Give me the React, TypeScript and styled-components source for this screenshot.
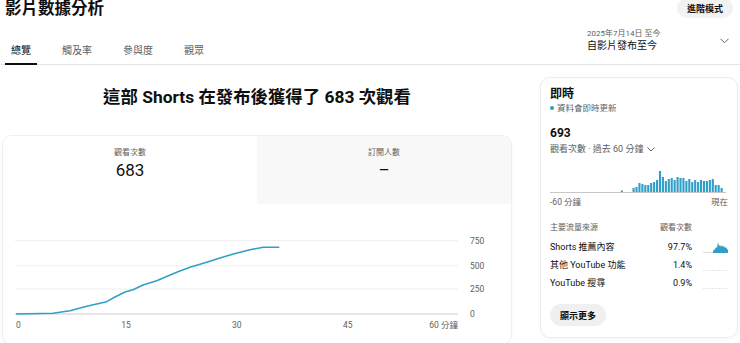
import React from 'react'
import styled, { createGlobalStyle } from 'styled-components'

const ACCENT = '#2f9fc8'
const MUTED = '#606060'
const FONT = 'Roboto, "Noto Sans CJK TC", sans-serif'

const GlobalStyle = createGlobalStyle`
  html, body {
    margin: 0;
    padding: 0;
    background: #fff;
  }
  body {
    font-family: ${FONT};
    color: #0f0f0f;
  }
`

const Page = styled.div`
  width: 740px;
  height: 343px;
  overflow: hidden;
`

const TopBar = styled.div`
  height: 18px;
  display: flex;
  justify-content: space-between;
  align-items: flex-start;
  padding: 0 7px 0 5px;
`

const Title = styled.h1`
  margin: 0;
  font-size: 16.5px;
  line-height: 18px;
  font-weight: 700;
`

const AdvancedButton = styled.button`
  margin-top: -2px;
  height: 20px;
  padding: 0 10px;
  border: none;
  border-radius: 10px;
  background: #f2f2f2;
  font: 700 9px ${FONT};
  color: #0f0f0f;
`

const TabRow = styled.div`
  height: 46px;
  display: flex;
  justify-content: space-between;
  align-items: flex-end;
  padding: 0 11px 0 5px;
  border-bottom: 1px solid #e5e5e5;
`

const Tabs = styled.div`
  display: flex;
  gap: 19px;
`

const Tab = styled.div<{ $active?: boolean }>`
  height: 25px;
  line-height: 25px;
  padding: 0 6px;
  margin-bottom: -1px;
  font-size: 10px;
  color: ${(p) => (p.$active ? '#0f0f0f' : MUTED)};
  border-bottom: 2px solid ${(p) => (p.$active ? '#0f0f0f' : 'transparent')};
`

const DateSelect = styled.div`
  align-self: flex-start;
  margin-top: 10px;
  width: 142px;
  display: flex;
  justify-content: space-between;
  align-items: center;
`

const DateRange = styled.div`
  font-size: 8px;
  line-height: 11px;
  color: ${MUTED};
`

const DateLabel = styled.div`
  font-size: 10px;
  line-height: 14px;
`

const Main = styled.div`
  display: flex;
  gap: 28px;
  padding: 0 2px;
`

const LeftCol = styled.div`
  width: 510px;
  flex: none;
`

const Headline = styled.h2`
  margin: 20px 0 0;
  font-size: 17.4px;
  line-height: 24px;
  font-weight: 700;
  text-align: center;
`

const MetricCard = styled.div`
  margin-top: 26px;
  border: 1px solid #efefef;
  border-radius: 10px;
  overflow: hidden;
  box-shadow: 0 1px 3px rgba(0, 0, 0, 0.04);
`

const MetricTabs = styled.div`
  display: grid;
  grid-template-columns: 1fr 1fr;
  height: 68px;
`

const MetricTab = styled.div<{ $selected?: boolean }>`
  background: ${(p) => (p.$selected ? '#fff' : '#f8f8f8')};
  text-align: center;
  padding-top: 12px;
`

const MetricLabel = styled.div`
  font-size: 8px;
  line-height: 10px;
  color: ${MUTED};
`

const MetricValue = styled.div`
  margin-top: 2px;
  font-size: 17px;
  line-height: 20px;
`

const Chart = styled.svg`
  display: block;
  font-family: ${FONT};
`

const RealtimeCard = styled.div`
  width: 198px;
  box-sizing: border-box;
  margin-top: 12px;
  align-self: flex-start;
  border: 1px solid #ececec;
  border-radius: 10px;
  padding: 8px 9px 11px;
  box-shadow: 0 1px 3px rgba(0, 0, 0, 0.04);
`

const RtTitle = styled.div`
  font-size: 12px;
  line-height: 16px;
  font-weight: 700;
`

const RtLive = styled.div`
  display: flex;
  align-items: center;
  gap: 3px;
  font-size: 8.5px;
  line-height: 12px;
  color: ${MUTED};
`

const Dot = styled.span`
  width: 4px;
  height: 4px;
  border-radius: 50%;
  background: ${ACCENT};
`

const RtValue = styled.div`
  margin-top: 11px;
  font-size: 12px;
  line-height: 16px;
  font-weight: 700;
`

const RtMetric = styled.div`
  margin-top: 2px;
  display: flex;
  align-items: center;
  gap: 4px;
  font-size: 9px;
  line-height: 12px;
  color: ${MUTED};
`

const Bars = styled.svg`
  display: block;
  margin-top: 8px;
`

const AxisRow = styled.div`
  margin-top: 4px;
  display: flex;
  justify-content: space-between;
  font-size: 8.5px;
  line-height: 11px;
  color: ${MUTED};
`

const SourceGrid = styled.div`
  margin-top: 14px;
  display: grid;
  grid-template-columns: 1fr auto 25px;
  column-gap: 11px;
  align-items: center;
`

const SourceHead = styled.div<{ $right?: boolean }>`
  font-size: 8px;
  line-height: 11px;
  color: ${MUTED};
  text-align: ${(p) => (p.$right ? 'right' : 'left')};
  margin-bottom: 5px;
`

const SourceCell = styled.div<{ $right?: boolean }>`
  font-size: 9px;
  line-height: 18px;
  text-align: ${(p) => (p.$right ? 'right' : 'left')};
`

const MoreButton = styled.button`
  margin-top: 12px;
  height: 22px;
  padding: 0 10px;
  border: none;
  border-radius: 11px;
  background: #f0f0f0;
  font: 700 9px ${FONT};
  color: #0f0f0f;
`

const linePoints: [number, number][] = [
  [13, 110], [50, 109.3], [67, 106.7], [83.7, 102.3], [103.7, 97.7], [112, 93],
  [122, 88], [130, 85.7], [140, 81], [153.7, 76.7], [173.7, 68.3], [187, 63.3],
  [203.7, 58.3], [213.7, 55], [230.3, 50], [247, 45.7], [260.3, 43.3], [276.3, 43.3],
]

const barHeights: Record<number, number> = { 24: 1.5 }
;[4, 5, 9, 8, 7, 7, 9, 10, 12, 21, 15, 11, 13, 14, 12, 15, 14, 14, 11, 13, 10, 12, 10, 12, 11, 11, 12, 13, 7, 7, 4].forEach(
  (h, i) => {
    barHeights[28 + i] = h
  }
)

function ViewsChart() {
  const grid = [
    { y: 36.7, label: '750' },
    { y: 61.7, label: '500' },
    { y: 85, label: '250' },
  ]
  const d = linePoints.map(([x, y], i) => `${i ? 'L' : 'M'}${x} ${y}`).join(' ')
  return (
    <Chart width={508} height={140} viewBox="0 0 508 140">
      {grid.map((g) => (
        <g key={g.label}>
          <line x1={12} x2={455} y1={g.y} y2={g.y} stroke="#eeeeee" strokeWidth={1} />
          <text x={467} y={g.y + 3} fontSize={8.5} fill={MUTED}>{g.label}</text>
        </g>
      ))}
      <line x1={12} x2={455} y1={110} y2={110} stroke="#cccccc" strokeWidth={1} />
      <text x={467} y={113} fontSize={8.5} fill={MUTED}>0</text>
      <path d={d} fill="none" stroke={ACCENT} strokeWidth={1.5} strokeLinejoin="round" />
      <text x={13} y={124} fontSize={8.5} fill={MUTED}>0</text>
      <text x={123} y={124} fontSize={8.5} fill={MUTED} textAnchor="middle">15</text>
      <text x={233.7} y={124} fontSize={8.5} fill={MUTED} textAnchor="middle">30</text>
      <text x={344.7} y={124} fontSize={8.5} fill={MUTED} textAnchor="middle">45</text>
      <text x={455} y={124} fontSize={8.5} fill={MUTED} textAnchor="end">60 分鐘</text>
    </Chart>
  )
}

function RealtimeBars() {
  const slot = 176 / 60
  return (
    <Bars width={178} height={30} viewBox="0 0 178 30">
      {Object.entries(barHeights).map(([k, h]) => (
        <rect key={k} x={Number(k) * slot + 0.4} y={29 - h} width={2.1} height={h} fill={ACCENT} />
      ))}
      <line x1={0} x2={176} y1={29.5} y2={29.5} stroke="#c8c8c8" strokeWidth={1} />
    </Bars>
  )
}

function Sparkline({ active }: { active?: boolean }) {
  if (active) {
    return (
      <svg width={25} height={12} viewBox="0 0 25 12">
        <line x1={0} x2={10} y1={11.5} y2={11.5} stroke="#d6d6d6" strokeWidth={0.8} />
        <path
          d="M10 12 L10 10 L12 8 L13 6 L14 7 L15 1 L16 5 L17 4 L18 6 L19 4 L20 6 L21 5 L22 7 L23 6 L24 8 L25 9 L25 12 Z"
          fill={ACCENT}
        />
      </svg>
    )
  }
  return (
    <svg width={25} height={12} viewBox="0 0 25 12">
      <line x1={0} x2={25} y1={11.5} y2={11.5} stroke="#dadada" strokeWidth={0.7} strokeDasharray="2 1" />
    </svg>
  )
}

const sources = [
  { name: 'Shorts 推薦內容', pct: '97.7%', active: true },
  { name: '其他 YouTube 功能', pct: '1.4%' },
  { name: 'YouTube 搜尋', pct: '0.9%' },
]

export default function App() {
  return (
    <>
      <GlobalStyle />
      <Page>
        <TopBar>
          <Title>影片數據分析</Title>
          <AdvancedButton>進階模式</AdvancedButton>
        </TopBar>
        <TabRow>
          <Tabs>
            <Tab $active>總覽</Tab>
            <Tab>觸及率</Tab>
            <Tab>參與度</Tab>
            <Tab>觀眾</Tab>
          </Tabs>
          <DateSelect>
            <div>
              <DateRange>2025年7月14日 至今</DateRange>
              <DateLabel>自影片發布至今</DateLabel>
            </div>
            <svg width={9} height={6} viewBox="0 0 9 6">
              <path d="M0.5 0.8 L4.5 4.8 L8.5 0.8" fill="none" stroke={MUTED} strokeWidth={1} />
            </svg>
          </DateSelect>
        </TabRow>
        <Main>
          <LeftCol>
            <Headline>這部 Shorts 在發布後獲得了 683 次觀看</Headline>
            <MetricCard>
              <MetricTabs>
                <MetricTab $selected>
                  <MetricLabel>觀看次數</MetricLabel>
                  <MetricValue>683</MetricValue>
                </MetricTab>
                <MetricTab>
                  <MetricLabel>訂閱人數</MetricLabel>
                  <MetricValue>–</MetricValue>
                </MetricTab>
              </MetricTabs>
              <ViewsChart />
            </MetricCard>
          </LeftCol>
          <RealtimeCard>
            <RtTitle>即時</RtTitle>
            <RtLive>
              <Dot />
              資料會即時更新
            </RtLive>
            <RtValue>693</RtValue>
            <RtMetric>
              觀看次數 · 過去 60 分鐘
              <svg width={8} height={5} viewBox="0 0 8 5">
                <path d="M0.5 0.5 L4 4 L7.5 0.5" fill="none" stroke={MUTED} strokeWidth={1} />
              </svg>
            </RtMetric>
            <RealtimeBars />
            <AxisRow>
              <span>-60 分鐘</span>
              <span>現在</span>
            </AxisRow>
            <SourceGrid>
              <SourceHead>主要流量來源</SourceHead>
              <SourceHead $right>觀看次數</SourceHead>
              <span />
              {sources.map((s) => (
                <React.Fragment key={s.name}>
                  <SourceCell>{s.name}</SourceCell>
                  <SourceCell $right>{s.pct}</SourceCell>
                  <Sparkline active={s.active} />
                </React.Fragment>
              ))}
            </SourceGrid>
            <MoreButton>顯示更多</MoreButton>
          </RealtimeCard>
        </Main>
      </Page>
    </>
  )
}
